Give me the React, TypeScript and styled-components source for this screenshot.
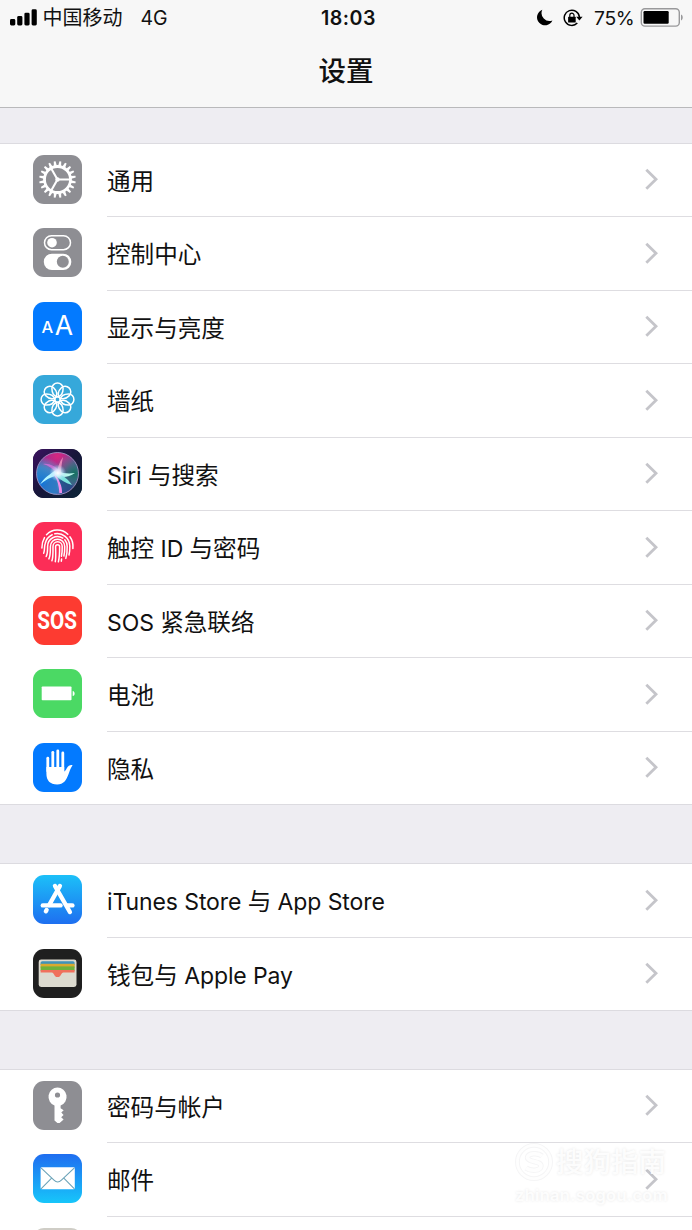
import type { ReactNode } from 'react';
import styled, { createGlobalStyle } from 'styled-components';

const GlobalStyle = createGlobalStyle`
  * {
    box-sizing: border-box;
  }

  body {
    margin: 0;
    background: #eeedf2;
    font-family: 'Inter', 'Noto Sans CJK SC', sans-serif;
    color: #111;
  }
`;

const Screen = styled.div`
  position: relative;
  width: 692px;
  height: 1230px;
  overflow: hidden;
  background: #eeedf2;
`;

const Header = styled.header`
  height: 108px;
  background: #f7f7f7;
  border-bottom: 1px solid #b9b9bb;
`;

const StatusBar = styled.div`
  display: grid;
  grid-template-columns: 1fr auto 1fr;
  align-items: center;
  height: 34px;
  padding: 0 8px 0 10px;
  font-size: 20px;
  line-height: 33px;
`;

const StatusSide = styled.div<{ $end?: boolean }>`
  display: flex;
  align-items: center;
  justify-content: ${({ $end }) => ($end ? 'flex-end' : 'flex-start')};
`;

const Carrier = styled.span`
  margin: 0 18px 0 5.5px;
  padding-top: 2px;
`;

const Network = styled.span`
  padding-top: 1px;
  font-size: 19.5px;
`;

const Clock = styled.span`
  padding: 1px 0 0 3px;
  font-size: 19.6px;
  font-weight: 600;
  letter-spacing: 0.5px;
`;

const Percent = styled.span`
  margin: 0 5.5px 0 11px;
  padding-top: 1px;
  font-size: 19.3px;
  letter-spacing: -0.3px;
`;

const Title = styled.h1`
  margin: 0;
  height: 73px;
  font-size: 27.5px;
  font-weight: 500;
  line-height: 75px;
  text-align: center;
`;

const Group = styled.section<{ $gap: number }>`
  margin-top: ${({ $gap }) => $gap}px;
  background: #fff;
  box-shadow: 0 -1px 0 #dcdbe0, inset 0 -1px 0 #dcdbe0;
`;

const Row = styled.div`
  display: flex;
  height: 73.5px;
  padding-left: 33px;
`;

const IconTile = styled.span<{ $fill: string }>`
  flex: none;
  width: 49px;
  height: 49px;
  margin: 11.3px 25px 0 0;
  border-radius: 11px;
  overflow: hidden;
  background: ${({ $fill }) => $fill};

  svg {
    display: block;
  }
`;

const RowBody = styled.div`
  flex: 1;
  display: flex;
  align-items: center;
  justify-content: space-between;
  padding-right: 33px;
  border-bottom: 1px solid #dedde1;

  ${Row}:last-child & {
    border-bottom-color: transparent;
  }
`;

const Label = styled.span`
  padding-top: 4px;
  font-size: 23.6px;
  line-height: 34px;
  white-space: pre;
`;

const Latin = styled.span`
  font-size: 23px;
  letter-spacing: -0.1px;
`;

const Watermark = styled.div`
  position: absolute;
  left: 515px;
  top: 1142px;
  display: grid;
  grid-template-columns: 38px auto;
  column-gap: 3px;
  color: rgba(255, 255, 255, 0.9);
  text-shadow: 0 0 3px rgba(0, 0, 0, 0.1);
`;

const WatermarkName = styled.span`
  font-size: 27.5px;
  font-weight: 500;
  line-height: 40px;
`;

const WatermarkSite = styled.span`
  grid-column: 1 / -1;
  font-size: 16.5px;
  font-weight: 600;
  line-height: 26px;
  letter-spacing: 0.3px;
`;

const Svg = ({ children }: { children: ReactNode }) => (
  <svg width="49" height="49" viewBox="0 0 49 49" fill="none">
    {children}
  </svg>
);

function GearIcon() {
  const teeth = Array.from({ length: 20 }, (_, i) => i * 18);
  return (
    <Svg>
      <circle cx="24.5" cy="24.5" r="13" stroke="#fff" strokeWidth="2.8" />
      {teeth.map((a) => (
        <path key={a} d="M22.9 11.6 L23.6 6.2 H25.4 L26.1 11.6 Z" fill="#fff" transform={`rotate(${a + 9} 24.5 24.5)`} />
      ))}
      <path d="M24.5 24.5 H38 M24.5 24.5 L17.8 12.8 M24.5 24.5 L17.8 36.2" stroke="#fff" strokeWidth="2.1" />
      <circle cx="24.5" cy="24.5" r="2.2" fill="#fff" />
    </Svg>
  );
}

function ControlIcon() {
  return (
    <Svg>
      <rect x="11.5" y="7.7" width="26" height="14" rx="7" stroke="#fff" strokeWidth="1.5" />
      <circle cx="19" cy="14.7" r="4.8" fill="#fff" />
      <rect x="10.8" y="25.7" width="27.5" height="16.3" rx="8.1" fill="#fff" />
      <circle cx="29.8" cy="33.8" r="6" fill="#8e8e93" />
    </Svg>
  );
}

function DisplayIcon() {
  return (
    <Svg>
      <text x="8.4" y="31" fontFamily="Inter, sans-serif" fontSize="16.5" fontWeight="500" fill="#fff">A</text>
      <text x="21.8" y="33.2" fontFamily="Inter, sans-serif" fontSize="26.5" fontWeight="400" fill="#fff">A</text>
    </Svg>
  );
}

function WallpaperIcon() {
  const petals = [0, 45, 90, 135, 180, 225, 270, 315];
  return (
    <Svg>
      {petals.map((a) => (
        <path
          key={a}
          d="M24.5 21.8 C19.8 20.8 18.9 16.6 18.9 13.4 A5.6 5.3 0 0 1 30.1 13.4 C30.1 16.6 29.2 20.8 24.5 21.8 Z"
          stroke="#fff"
          strokeWidth="1.5"
          transform={`rotate(${a} 24.5 24.5)`}
        />
      ))}
      <circle cx="24.5" cy="24.5" r="2.7" stroke="#fff" strokeWidth="1.3" />
    </Svg>
  );
}

function SiriIcon() {
  return (
    <Svg>
      <defs>
        <linearGradient id="siriBack" x1="0" y1="0" x2="1" y2="1">
          <stop offset="0" stopColor="#3c1260" />
          <stop offset="0.5" stopColor="#17163a" />
          <stop offset="1" stopColor="#0d2638" />
        </linearGradient>
        <radialGradient id="siriPink" cx="0.5" cy="0.08" r="0.55">
          <stop offset="0" stopColor="#d8267e" />
          <stop offset="0.6" stopColor="#c2268f" stopOpacity="0.7" />
          <stop offset="1" stopColor="#a83a9f" stopOpacity="0" />
        </radialGradient>
        <radialGradient id="siriBlue" cx="0.1" cy="0.75" r="0.65">
          <stop offset="0" stopColor="#1270d8" />
          <stop offset="0.6" stopColor="#28a8dc" stopOpacity="0.7" />
          <stop offset="1" stopColor="#4bd6e8" stopOpacity="0" />
        </radialGradient>
        <radialGradient id="siriGreen" cx="0.9" cy="0.5" r="0.5">
          <stop offset="0" stopColor="#14705f" />
          <stop offset="1" stopColor="#2fae98" stopOpacity="0" />
        </radialGradient>
        <radialGradient id="siriGlow">
          <stop offset="0" stopColor="#fff" />
          <stop offset="0.35" stopColor="#e3f3ff" stopOpacity="0.85" />
          <stop offset="1" stopColor="#a0d8ff" stopOpacity="0" />
        </radialGradient>
      </defs>
      <rect width="49" height="49" fill="url(#siriBack)" />
      <circle cx="24.5" cy="24.5" r="21" fill="#5b3595" />
      <circle cx="24.5" cy="24.5" r="21" fill="url(#siriPink)" />
      <circle cx="24.5" cy="24.5" r="21" fill="url(#siriBlue)" />
      <circle cx="24.5" cy="24.5" r="21" fill="url(#siriGreen)" />
      <path d="M25 25 C30 27 36 33 40 37 C36 43 30 45 27 45 Z" fill="#1d4a86" opacity="0.75" />
      <path d="M24 25 C23 32 24 39 25 44 C19 45 12 42 9 38 Z" fill="#2a6fc0" opacity="0.5" />
      <path d="M25 26 C18 28 12 31 7 35.5 C11 29 17 25 23 21 Z" fill="#b5f6ff" />
      <path d="M24 22 C30 24.5 36 25 42 24 C36 28.5 29 28.5 24 27 Z" fill="#b9f7ec" />
      <path d="M23 23 C31 27 36 31 39 36 C32 34 27 30 23 27 Z" fill="#7be3dc" />
      <path d="M22 25 C26 31 29.5 37 29 44 L26.3 44 C26 37 24.5 31 21.5 27 Z" fill="#f08cea" />
      <path d="M24 25 C24.5 19 26 13 30 8 C28.4 15 28.4 20 27.5 25 Z" fill="#ff9dca" opacity="0.75" />
      <path d="M25 25 C20 20 15 16 10 15 C16 14 22 17 27 22 Z" fill="#d86edb" opacity="0.8" />
      <circle cx="24.8" cy="24" r="8.5" fill="url(#siriGlow)" />
      <circle cx="24.5" cy="24.5" r="21" stroke="#a99ac8" strokeWidth="0.8" />
    </Svg>
  );
}

function TouchIdIcon() {
  return (
    <Svg>
      <g stroke="#fff" strokeWidth="1.5" strokeLinecap="round">
        <path d="M13.5 12.7 A15.2 15.2 0 0 1 34.8 12.2" />
        <path d="M8.9 26 C8.7 21.5 9.8 18.5 11.5 15.6" />
        <path d="M36.9 14.8 C39.6 18.3 40.3 22 39.9 26.5" />
        <path d="M10.7 31.2 C12 28 11 25 12.2 21.5 A12.6 12.8 0 0 1 19.2 12.7" />
        <path d="M21.8 11.8 A12.6 12.8 0 0 1 36.8 24 C36.9 27.5 36.7 30 36 33" />
        <path d="M13.2 34.5 C14.8 31.5 14.5 28.5 14.6 24.5 A9.9 10 0 0 1 29.8 16.1" />
        <path d="M31.8 17.8 A9.8 9.8 0 0 1 34.2 24.5 C34.3 29 34 32.5 32.8 36.4" />
        <path d="M15.9 36.9 C17.6 33.5 17.3 29 17.4 24.5 A7.15 7.3 0 0 1 31.7 24.5 C31.8 29 31.6 31.5 30.9 34" />
        <path d="M18.9 38.8 C20.4 34.5 19.9 29 20 24.5 A4.6 4.7 0 0 1 29.2 24.5 C29.3 29 29.1 31.5 28.4 34.3" />
        <path d="M22.3 39.7 C23.1 35 22.6 29 22.6 24.8 A2 2 0 0 1 26.6 24.8 C26.7 30.5 26.6 34.5 25.4 39.8" />
        <path d="M28.6 37.1 L28.3 39.2" />
      </g>
    </Svg>
  );
}

function SosIcon() {
  return (
    <Svg>
      <text
        transform="translate(4.3 33.4) scale(0.81 1)"
        fontFamily="'Roboto', 'Liberation Sans', sans-serif"
        fontSize="25.5"
        fontWeight="700"
        fill="#fff"
      >
        SOS
      </text>
    </Svg>
  );
}

function BatteryIcon() {
  return (
    <Svg>
      <rect x="8.7" y="17.4" width="29.8" height="13.8" rx="0.8" fill="#fff" />
      <path d="M39.7 21.9 C42.3 22.3 42.3 26.6 39.7 27 Z" fill="#fff" />
    </Svg>
  );
}

function PrivacyIcon() {
  return (
    <Svg>
      <g stroke="#fff" strokeWidth="2.8" strokeLinecap="round">
        <path d="M14.8 15.2 V28" />
        <path d="M19.8 9.3 V28" />
        <path d="M24.8 7.8 V28" />
        <path d="M29.8 9.9 V28" />
      </g>
      <path
        d="M13.4 24 H31.2 V28.5 C32.3 28 33 26.5 33.9 24.9 C35.1 22.7 37.2 21.6 39.3 22 C39.6 22.4 39.3 22.9 38.8 23.5 C37.4 25.5 36.6 28.5 35.4 31.4 C33.2 37.2 30.6 41.4 24.2 41.4 C17 41.4 13.4 37.7 13.4 30.5 Z"
        fill="#fff"
      />
    </Svg>
  );
}

function AppStoreIcon() {
  return (
    <Svg>
      <g stroke="#fff" strokeWidth="4.4" strokeLinecap="round">
        <path d="M26.9 11 L16.2 30" />
        <path d="M13.6 35 L12.9 36.3" />
        <path d="M22 11 L36.9 37" />
        <path d="M9.8 30.4 H27.5" />
        <path d="M34.5 30.4 H39.4" />
      </g>
    </Svg>
  );
}

function WalletIcon() {
  return (
    <Svg>
      <rect x="5.7" y="10.5" width="37.8" height="27.5" rx="2.4" fill="#dcdacf" />
      <rect x="7.6" y="12.2" width="34" height="5" rx="1.6" fill="#3f93b8" />
      <rect x="7.6" y="14.8" width="34" height="4" fill="#d9a92f" />
      <rect x="7.6" y="17.4" width="34" height="4.4" fill="#6fb13b" />
      <path d="M7.6 21 H41.6 V23.4 H30.4 C28 23.4 28.2 28 24.6 28 C21 28 21.2 23.4 18.8 23.4 H7.6 Z" fill="#f0705c" />
    </Svg>
  );
}

function KeyIcon() {
  return (
    <Svg>
      <path
        fillRule="evenodd"
        d="M24.5 6.5 A9.3 9.3 0 0 1 27.6 24.5 V27.2 L30.7 29.3 L28.3 31.6 L30.6 34 L28.2 36.2 L30.6 38.4 L26.6 42 L24.4 42 L21.5 39.4 V24.5 A9.3 9.3 0 0 1 24.5 6.5 Z M24.5 11.4 A2.6 2.6 0 1 0 24.5 16.6 A2.6 2.6 0 1 0 24.5 11.4 Z"
        fill="#fff"
      />
    </Svg>
  );
}

function MailIcon() {
  return (
    <Svg>
      <rect x="7.6" y="13.2" width="34.2" height="22" rx="1.2" fill="#fff" />
      <path
        d="M8 13.8 L21 26.2 C23.2 28.3 26.2 28.3 28.4 26.2 L41.4 13.8 M8 34.8 L18.6 24.2 M41.4 34.8 L30.8 24.2"
        stroke="#6ba3b8"
        strokeWidth="1.1"
      />
    </Svg>
  );
}

const Chevron = () => (
  <svg width="15" height="23" viewBox="0 0 15 23" fill="none">
    <path d="M2.3 1.7 L12 11.2 L2.3 20.7" stroke="#c5c5ca" strokeWidth="2.8" />
  </svg>
);

const SignalBars = () => (
  <svg width="27" height="17" viewBox="0 0 27 17">
    <rect x="0" y="10" width="5.3" height="6.5" rx="1.4" />
    <rect x="7.2" y="7" width="5.2" height="9.5" rx="1.4" />
    <rect x="14.4" y="3.7" width="5.2" height="12.8" rx="1.4" />
    <rect x="21.6" y="0.3" width="5.2" height="16.2" rx="1.4" />
  </svg>
);

const Moon = () => (
  <svg width="16" height="17" viewBox="0 0 16 17">
    <path d="M5.3 0.8 A8 8 0 1 0 15.4 11.4 A7.9 7.9 0 0 1 5.3 0.8 Z" />
  </svg>
);

const LockSvg = styled.svg`
  margin-left: 10px;
`;

const RotationLock = () => (
  <LockSvg width="20" height="18" viewBox="0 0 20 18" fill="none">
    <path d="M14.3 14.1 A7.6 7.6 0 1 1 16.4 8" stroke="#000" strokeWidth="1.5" />
    <path d="M13.2 7.7 H19.6 L16.4 11.6 Z" fill="#000" />
    <rect x="5.1" y="7.8" width="7.6" height="5.6" rx="0.5" fill="#000" />
    <path d="M6.8 8.2 V6.3 A2.1 2.1 0 0 1 11 6.3 V8.2" stroke="#000" strokeWidth="1.2" />
  </LockSvg>
);

const PowerLevel = () => (
  <svg width="44" height="20" viewBox="0 0 44 20" fill="none">
    <rect x="1.3" y="0.7" width="38" height="17.4" rx="3.6" stroke="#99999b" strokeWidth="1.4" />
    <rect x="3.5" y="3" width="25.2" height="12.8" rx="1.2" fill="#000" />
    <path d="M41 6.5 C43.3 7.1 43.3 11.7 41 12.4 Z" fill="#99999b" />
  </svg>
);

const WatermarkLogo = () => (
  <svg width="38" height="40" viewBox="0 0 38 40" fill="none">
    <circle cx="19" cy="20" r="16.6" stroke="#f5f5f6" strokeWidth="4.8" />
    <circle cx="19" cy="20" r="16.6" stroke="#fefefe" strokeWidth="2.8" />
    <path d="M27 14 C23 10.5 13 11 12.5 15.5 C12.5 20.5 26 18.5 26 24 C25.5 29 16 29.5 11 26" stroke="#f5f5f6" strokeWidth="5.4" />
    <path d="M27 14 C23 10.5 13 11 12.5 15.5 C12.5 20.5 26 18.5 26 24 C25.5 29 16 29.5 11 26" stroke="#fefefe" strokeWidth="3.6" />
  </svg>
);

interface Item {
  label?: string;
  fill: string;
  icon?: ReactNode;
}

const groups: { gap: number; items: Item[] }[] = [
  {
    gap: 35.7,
    items: [
      { label: '通用', fill: '#8e8e93', icon: <GearIcon /> },
      { label: '控制中心', fill: '#8e8e93', icon: <ControlIcon /> },
      { label: '显示与亮度', fill: '#037aff', icon: <DisplayIcon /> },
      { label: '墙纸', fill: '#36a8da', icon: <WallpaperIcon /> },
      { label: 'Siri 与搜索', fill: '#17163a', icon: <SiriIcon /> },
      { label: '触控 ID 与密码', fill: '#fc2d57', icon: <TouchIdIcon /> },
      { label: 'SOS 紧急联络', fill: '#fd3b31', icon: <SosIcon /> },
      { label: '电池', fill: '#4bd964', icon: <BatteryIcon /> },
      { label: '隐私', fill: '#037aff', icon: <PrivacyIcon /> },
    ],
  },
  {
    gap: 59,
    items: [
      { label: 'iTunes Store 与 App Store', fill: 'linear-gradient(#1cc0f8, #1e6ff0)', icon: <AppStoreIcon /> },
      { label: '钱包与 Apple Pay', fill: '#1f1f1f', icon: <WalletIcon /> },
    ],
  },
  {
    gap: 58.5,
    items: [
      { label: '密码与帐户', fill: '#8e8e93', icon: <KeyIcon /> },
      { label: '邮件', fill: 'linear-gradient(#1f6df0, #17c6fa)', icon: <MailIcon /> },
      { fill: '#cfcdc6' },
    ],
  },
];

// Latin runs are set slightly smaller than the Chinese around them
function renderLabel(label: string) {
  return label
    .split(/([A-Za-z ]+)/)
    .filter(Boolean)
    .map((part, i) => (/[A-Za-z ]/.test(part) ? <Latin key={i}>{part}</Latin> : part));
}

function App() {
  return (
    <Screen>
      <GlobalStyle />
      <Header>
        <StatusBar>
          <StatusSide>
            <SignalBars />
            <Carrier>中国移动</Carrier>
            <Network>4G</Network>
          </StatusSide>
          <Clock>18:03</Clock>
          <StatusSide $end>
            <Moon />
            <RotationLock />
            <Percent>75%</Percent>
            <PowerLevel />
          </StatusSide>
        </StatusBar>
        <Title>设置</Title>
      </Header>
      {groups.map((group, g) => (
        <Group key={g} $gap={group.gap}>
          {group.items.map((item, i) => (
            <Row key={i}>
              <IconTile $fill={item.fill}>{item.icon}</IconTile>
              <RowBody>
                {item.label && <Label>{renderLabel(item.label)}</Label>}
                <Chevron />
              </RowBody>
            </Row>
          ))}
        </Group>
      ))}
      <Watermark>
        <WatermarkLogo />
        <WatermarkName>搜狗指南</WatermarkName>
        <WatermarkSite>zhinan.sogou.com</WatermarkSite>
      </Watermark>
    </Screen>
  );
}

export default App;
